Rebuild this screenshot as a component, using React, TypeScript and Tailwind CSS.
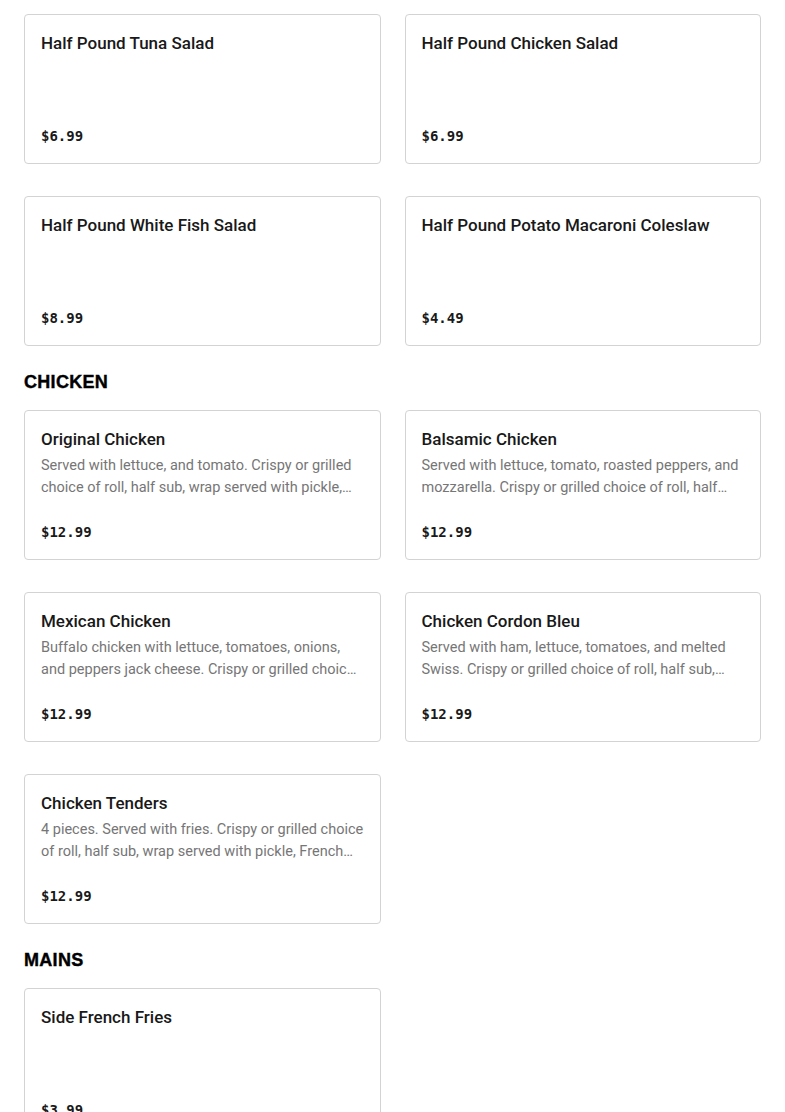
type Item = { name: string; desc?: string; price: string };

const sections: { title?: string; items: Item[] }[] = [
  {
    items: [
      { name: "Half Pound Tuna Salad", price: "$6.99" },
      { name: "Half Pound Chicken Salad", price: "$6.99" },
      { name: "Half Pound White Fish Salad", price: "$8.99" },
      { name: "Half Pound Potato Macaroni Coleslaw", price: "$4.49" },
    ],
  },
  {
    title: "CHICKEN",
    items: [
      {
        name: "Original Chicken",
        desc: "Served with lettuce, and tomato. Crispy or grilled choice of roll, half sub, wrap served with pickle, French fries and a can of soda.",
        price: "$12.99",
      },
      {
        name: "Balsamic Chicken",
        desc: "Served with lettuce, tomato, roasted peppers, and mozzarella. Crispy or grilled choice of roll, half sub, wrap served with pickle.",
        price: "$12.99",
      },
      {
        name: "Mexican Chicken",
        desc: "Buffalo chicken with lettuce, tomatoes, onions, and peppers jack cheese. Crispy or grilled choice of roll, half sub.",
        price: "$12.99",
      },
      {
        name: "Chicken Cordon Bleu",
        desc: "Served with ham, lettuce, tomatoes, and melted Swiss. Crispy or grilled choice of roll, half sub, wrap served with pickle.",
        price: "$12.99",
      },
      {
        name: "Chicken Tenders",
        desc: "4 pieces. Served with fries. Crispy or grilled choice of roll, half sub, wrap served with pickle, French fries and a can of soda.",
        price: "$12.99",
      },
    ],
  },
  {
    title: "MAINS",
    items: [{ name: "Side French Fries", price: "$3.99" }],
  },
];

function Card({ item }: { item: Item }) {
  return (
    <div className="flex h-[150px] flex-col rounded border border-[#d3d3d3] bg-white p-4">
      <h3 className="text-[17px] font-medium leading-6 text-[#191919]">{item.name}</h3>
      {item.desc && (
        <p className="mt-1 line-clamp-2 text-[14.5px] leading-[22px] text-[#767676]">{item.desc}</p>
      )}
      <div className="mt-auto font-['DejaVu_Sans_Mono',monospace] text-[14px] font-bold leading-[22px] text-[#191919]">
        {item.price}
      </div>
    </div>
  );
}

export default function App() {
  return (
    <div className="min-h-screen bg-white px-6 pt-[14px] pb-10 font-['Roboto',sans-serif]">
      {sections.map((s, i) => (
        <section key={i} className={i > 0 ? "mt-6" : ""}>
          {s.title && (
            <h2 className="mb-4 font-['Liberation_Sans',Arial,sans-serif] text-[18px] font-bold leading-6 tracking-[0.3px] text-black [-webkit-text-stroke:0.4px_black]">
              {s.title}
            </h2>
          )}
          <div className="grid grid-cols-2 gap-x-6 gap-y-8">
            {s.items.map((it) => (
              <Card key={it.name} item={it} />
            ))}
          </div>
        </section>
      ))}
    </div>
  );
}
